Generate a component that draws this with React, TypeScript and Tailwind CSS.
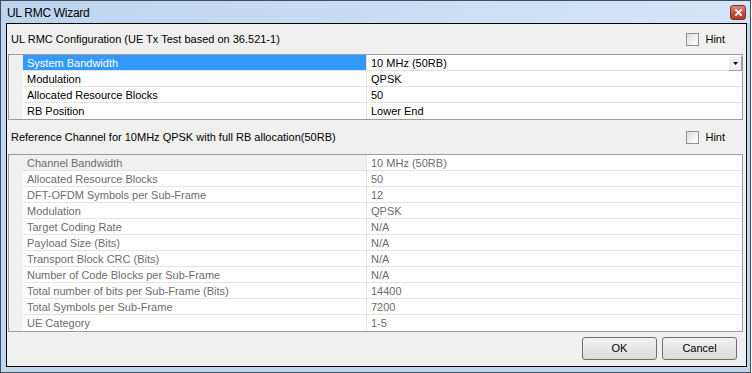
import React from "react";

type Row = { label: string; value: string };

const configRows: Row[] = [
  { label: "System Bandwidth", value: "10 MHz (50RB)" },
  { label: "Modulation", value: "QPSK" },
  { label: "Allocated Resource Blocks", value: "50" },
  { label: "RB Position", value: "Lower End" },
];

const refRows: Row[] = [
  { label: "Channel Bandwidth", value: "10 MHz (50RB)" },
  { label: "Allocated Resource Blocks", value: "50" },
  { label: "DFT-OFDM Symbols per Sub-Frame", value: "12" },
  { label: "Modulation", value: "QPSK" },
  { label: "Target Coding Rate", value: "N/A" },
  { label: "Payload Size (Bits)", value: "N/A" },
  { label: "Transport Block CRC (Bits)", value: "N/A" },
  { label: "Number of Code Blocks per Sub-Frame", value: "N/A" },
  { label: "Total number of bits per Sub-Frame (Bits)", value: "14400" },
  { label: "Total Symbols per Sub-Frame", value: "7200" },
  { label: "UE Category", value: "1-5" },
];

function HintBox() {
  return (
    <label className="flex items-center gap-[6px] text-[11px] text-black">
      <span className="w-[13px] h-[13px] border border-[#8e8f8f] bg-gradient-to-br from-[#dedede] to-white" />
      Hint
    </label>
  );
}

function SectionHeader({ title, className }: { title: string; className: string }) {
  return (
    <div className={`flex items-center justify-between pl-[4px] pr-[21px] ${className}`}>
      <span className="text-[11px] text-black">{title}</span>
      <HintBox />
    </div>
  );
}

function ComboArrow() {
  return (
    <div className="absolute right-0 top-[1px] w-[14px] h-[15px] bg-[#f0f0f0] border border-t-white border-l-white border-r-[#a0a0a0] border-b-[#a0a0a0] flex items-center justify-center">
      <svg width="5" height="3" viewBox="0 0 5 3">
        <path d="M0 0h5L2.5 3z" fill="#000" />
      </svg>
    </div>
  );
}

function ConfigGrid() {
  return (
    <div className="ml-[1px] mr-[3px] h-[66px] border border-[#9c9c9c] bg-white flex">
      <div className="w-[14px] bg-[#f0f0f0]" />
      <div className="flex-1 flex flex-col">
        {configRows.map((r, i) => (
          <div key={r.label} className={`flex h-[16px] ${i < configRows.length - 1 ? "border-b border-[#e3e3e3]" : ""}`}>
            <div className={`w-[343px] pl-[4px] pt-[1px] text-[11px] leading-[14px] ${i === 0 ? "bg-[#3399ff] text-white" : "text-black"}`}>
              {r.label}
            </div>
            <div className="relative flex-1 border-l border-[#e3e3e3] pl-[4px] pt-[1px] text-[11px] leading-[14px] text-black">
              {r.value}
              {i === 0 && <ComboArrow />}
            </div>
          </div>
        ))}
      </div>
    </div>
  );
}

function ReferenceGrid() {
  return (
    <div className="ml-[1px] mr-[3px] h-[178px] border border-[#9c9c9c] bg-white flex">
      <div className="w-[14px] bg-[#f0f0f0]" />
      <div className="flex-1 flex flex-col">
        {refRows.map((r, i) => (
          <div key={r.label} className={`flex h-[16px] ${i < refRows.length - 1 ? "border-b border-[#e3e3e3]" : ""}`}>
            <div className={`w-[343px] pl-[4px] pt-[1px] text-[11px] leading-[14px] text-[#6d6d6d] ${i === 0 ? "bg-[#f0f0f0]" : ""}`}>
              {r.label}
            </div>
            <div className="flex-1 border-l border-[#e3e3e3] pl-[4px] pt-[1px] text-[11px] leading-[14px] text-[#6d6d6d]">
              {r.value}
            </div>
          </div>
        ))}
      </div>
    </div>
  );
}

function DialogButton({ label }: { label: string }) {
  return (
    <button className="w-[75px] h-[23px] rounded-[3px] border border-[#707070] bg-gradient-to-b from-[#f2f2f2] to-[#dcdcdc] text-[11px] text-black">
      {label}
    </button>
  );
}

export default function App() {
  return (
    <div className="w-[752px] h-[373px] bg-white font-['Liberation_Sans',Arial,sans-serif]">
      <div className="w-[751px] h-[373px] border border-[#3f4d5c] bg-[#bfd6ef] flex flex-col">
        {/* title bar */}
        <div className="h-[22px] flex items-start justify-between pl-[6px] pr-[4px] bg-gradient-to-r from-[#bcd4ef] via-[#c9def6] to-[#d3e5f8]">
          <span className="pt-[5px] text-[12px] leading-[14px] tracking-[-0.3px] text-black">UL RMC Wizard</span>
          <div className="mt-[4px] w-[16px] h-[15px] rounded-[3px] border border-[#7d2f27] bg-gradient-to-b from-[#e4897c] via-[#c9513f] to-[#b83a28] flex items-center justify-center">
            <svg width="7" height="7" viewBox="0 0 7 7">
              <path d="M1 1l5 5M6 1l-5 5" stroke="#fff" strokeWidth="1.8" strokeLinecap="square" />
            </svg>
          </div>
        </div>

        {/* client area */}
        <div className="ml-[5px] mr-[3px] mb-[5px] flex-1 border border-black bg-[#f0f0f0] flex flex-col">
          <SectionHeader title="UL RMC Configuration (UE Tx Test based on 36.521-1)" className="h-[30px]" />
          <ConfigGrid />
          <SectionHeader title="Reference Channel for 10MHz QPSK with full RB allocation(50RB)" className="h-[34px]" />
          <ReferenceGrid />
          <div className="flex-1 flex items-start justify-end gap-[5px] pt-[5px] pr-[9px]">
            <DialogButton label="OK" />
            <DialogButton label="Cancel" />
          </div>
        </div>
      </div>
    </div>
  );
}
